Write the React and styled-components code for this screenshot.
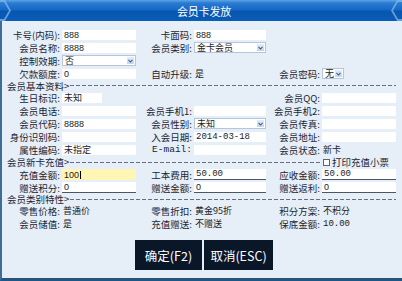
import React from 'react';
import styled, { createGlobalStyle } from 'styled-components';

const GlobalStyle = createGlobalStyle`
  html, body {
    margin: 0;
    padding: 0;
    background: #e6eff8;
  }
  body {
    font-family: "Noto Sans CJK SC", "Noto Sans", sans-serif;
  }
`;

const Arrow = () => (
  <ArrowBox>
    <svg width="5" height="4" viewBox="0 0 5 4">
      <path d="M0.5 0.8 L2.5 3 L4.5 0.8" fill="none" stroke="#2f5f9e" strokeWidth="1.1" />
    </svg>
  </ArrowBox>
);

const Label = ({ children, mono }) => <LabelText $mono={mono}>{children}</LabelText>;

const App = () => {
  return (
    <>
      <GlobalStyle />
      <Window>
        <TitleBar>
          <Chevron width="13" height="21" viewBox="0 0 13 21" $side="left">
            <polygon points="0,0 5,0 11,10.5 5,21 0,21 0,19 4,19 9,10.5 4,2 0,2" fill="#7fb6ea" opacity="0.75" />
          </Chevron>
          <TitleText>会员卡发放</TitleText>
          <Chevron width="13" height="21" viewBox="0 0 13 21" $side="right">
            <polygon points="13,0 8,0 2,10.5 8,21 13,21 13,19 9,19 4,10.5 9,2 13,2" fill="#7fb6ea" opacity="0.75" />
          </Chevron>
        </TitleBar>

        <Content>
          <Row>
            <Label>卡号(内码):</Label>
            <Field>888</Field>
            <Label>卡面码:</Label>
            <Field>888</Field>
          </Row>
          <Row>
            <Label>会员名称:</Label>
            <Field>8888</Field>
            <Label>会员类别:</Label>
            <Select><span>金卡会员</span><Arrow /></Select>
          </Row>
          <Row>
            <Label>控制效期:</Label>
            <Select><span>否</span><Arrow /></Select>
          </Row>
          <Row>
            <Label>欠款额度:</Label>
            <Field>0</Field>
            <Label>自动升级:</Label>
            <Value>是</Value>
            <Label>会员密码:</Label>
            <Select $w={22}><span>无</span><Arrow /></Select>
          </Row>

          <Section $h={11}>
            <SectionTitle>会员基本资料&gt;</SectionTitle>
            <Dashes />
          </Section>

          <Row>
            <Label>生日标识:</Label>
            <Field $w={40}>未知</Field>
            <span />
            <span />
            <Label>会员QQ:</Label>
            <Field />
          </Row>
          <Row>
            <Label>会员电话:</Label>
            <Field />
            <Label>会员手机1:</Label>
            <Field />
            <Label>会员手机2:</Label>
            <Field />
          </Row>
          <Row>
            <Label>会员代码:</Label>
            <Field>8888</Field>
            <Label>会员性别:</Label>
            <Select><span>未知</span><Arrow /></Select>
            <Label>会员传真:</Label>
            <Field />
          </Row>
          <Row>
            <Label>身份识别码:</Label>
            <Field />
            <Label>入会日期:</Label>
            <Field $mono>2014-03-18</Field>
            <Label>会员地址:</Label>
            <Field />
          </Row>
          <Row>
            <Label>属性编码:</Label>
            <Field>未指定</Field>
            <Label mono>E-mail:</Label>
            <Field />
            <Label>会员状态:</Label>
            <Value>新卡</Value>
          </Row>

          <Section $h={12}>
            <SectionTitle>会员新卡充值&gt;</SectionTitle>
            <Dashes />
            <PrintCheck>
              <CheckBox />
              打印充值小票
            </PrintCheck>
          </Section>

          <Row>
            <Label>充值金额:</Label>
            <Field $tone="yellow" $h={11}>100<Caret /></Field>
            <Label>工本费用:</Label>
            <Field $mono $line $h={11}>50.00</Field>
            <Label>应收金额:</Label>
            <Field $mono $line $h={11}>50.00</Field>
          </Row>
          <Row>
            <Label>赠送积分:</Label>
            <Field $line $h={11}>0</Field>
            <Label>赠送金额:</Label>
            <Field $line $h={11}>0</Field>
            <Label>赠送返利:</Label>
            <Field $line $h={11}>0</Field>
          </Row>

          <Section $h={10}>
            <SectionTitle>会员类别特性&gt;</SectionTitle>
            <Dashes />
          </Section>

          <Row>
            <Label>零售价格:</Label>
            <Value>普通价</Value>
            <Label>零售折扣:</Label>
            <Value>黄金95折</Value>
            <Label>积分方案:</Label>
            <Value>不积分</Value>
          </Row>
          <Row>
            <Label>会员储值:</Label>
            <Value>是</Value>
            <Label>充值赠送:</Label>
            <Value>不赠送</Value>
            <Label>保底金额:</Label>
            <Value $mono>10.00</Value>
          </Row>

          <Buttons>
            <Button $w={67}>确定(F2)</Button>
            <Button $w={69}>取消(ESC)</Button>
          </Buttons>
        </Content>
      </Window>
    </>
  );
};

export default App;

const Window = styled.div`
  width: 402px;
  height: 281px;
  display: flex;
  flex-direction: column;
  overflow: hidden;
  background: #e6eff8;
`
const TitleBar = styled.div`
  position: relative;
  flex: none;
  height: 21px;
  display: flex;
  align-items: center;
  justify-content: center;
  background: linear-gradient(#5da5e6 0, #2b7bd2 3px, #1467c4 10px, #0756b0 11px, #0a5cb7 100%);
`
const Chevron = styled.svg`
  position: absolute;
  top: 0;
  ${p => (p.$side === 'left' ? 'left: 0;' : 'right: 0;')}
`
const TitleText = styled.div`
  color: #ffffff;
  font-size: 11px;
  line-height: 12px;
  padding-left: 6px;
  letter-spacing: -0.2px;
`
const Content = styled.div`
  flex: 1;
  box-sizing: border-box;
  border-left: 2px solid #3d6d99;
  border-bottom: 3px solid #24557f;
  padding-top: 7px;
`
const Row = styled.div`
  display: grid;
  grid-template-columns: 58px 76px 56px 74px 54px 76px;
  height: 13px;
  align-items: center;
`
const LabelText = styled.div`
  text-align: right;
  white-space: nowrap;
  font-size: 9.5px;
  line-height: 10px;
  color: #1c2533;
  font-family: ${p => (p.$mono ? '"Liberation Mono", monospace' : '"Noto Sans CJK SC", sans-serif')};
`
const Field = styled.div`
  box-sizing: border-box;
  margin-left: 2px;
  width: ${p => (p.$w ? `${p.$w}px` : 'auto')};
  height: ${p => p.$h || 10}px;
  padding-left: 2px;
  display: flex;
  align-items: center;
  background: ${p => (p.$tone === 'yellow' ? '#fff6b4' : '#ffffff')};
  border-bottom: ${p => (p.$line ? '1px solid #4d5665' : 'none')};
  font-family: ${p => (p.$mono ? '"Liberation Mono", "Noto Sans CJK SC", monospace' : '"Liberation Sans", "Noto Sans CJK SC", sans-serif')};
  font-size: 9px;
  line-height: 10px;
  color: #1b1b1b;
  white-space: nowrap;
  overflow: hidden;
`
const Select = styled(Field)`
  height: 11px;
  justify-content: space-between;
  border: 1px solid #b6c6d8;
  padding-right: 1px;
  overflow: visible;
  line-height: 9px;
  font-family: "Noto Sans CJK SC", sans-serif;
`
const ArrowBox = styled.div`
  width: 7px;
  height: 7px;
  display: flex;
  align-items: center;
  justify-content: center;
  background: linear-gradient(#e4edf7, #c3d4e8);
`
const Value = styled.div`
  padding-left: 3px;
  font-size: 9px;
  line-height: 10px;
  color: #1b1b1b;
  white-space: nowrap;
  font-family: ${p => (p.$mono ? '"Liberation Mono", monospace' : '"Noto Sans CJK SC", sans-serif')};
`
const Caret = styled.span`
  width: 0;
  height: 8px;
  margin-left: 1px;
  border-left: 1px solid #000;
`
const Section = styled.div`
  display: flex;
  align-items: center;
  height: ${p => p.$h}px;
  padding: 0 6px 0 5px;
`
const SectionTitle = styled.div`
  font-size: 9.5px;
  line-height: 10px;
  color: #1c2533;
  white-space: nowrap;
`
const Dashes = styled.div`
  flex: 1;
  height: 1px;
  margin-left: 1px;
  background: repeating-linear-gradient(90deg, #66707d 0 4px, transparent 4px 6px);
`
const PrintCheck = styled.div`
  width: 73px;
  margin-left: 2px;
  display: flex;
  align-items: center;
  gap: 2px;
  font-size: 9.5px;
  line-height: 10px;
  color: #1c2533;
  white-space: nowrap;
`
const CheckBox = styled.span`
  box-sizing: border-box;
  width: 7px;
  height: 7px;
  background: #ffffff;
  border: 1px solid #5b6675;
`
const Buttons = styled.div`
  display: flex;
  justify-content: center;
  gap: 2px;
  margin-top: 10px;
  padding-left: 4px;
`
const Button = styled.button`
  width: ${p => p.$w}px;
  height: 30px;
  padding: 0;
  border: none;
  background: #0a1729;
  color: #ffffff;
  font-family: "Noto Sans CJK SC", sans-serif;
  font-size: 12.5px;
`
